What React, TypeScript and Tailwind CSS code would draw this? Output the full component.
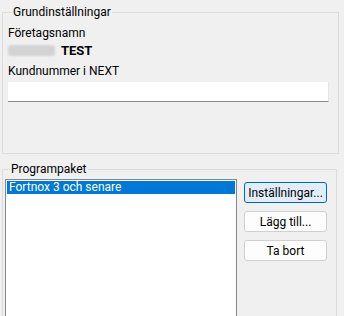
import React from "react";

const font = { fontFamily: 'Roboto, "Liberation Sans", sans-serif' };

function WinButton({ label, focused }: { label: string; focused?: boolean }) {
  return (
    <button
      className={
        "h-[21px] w-[83px] rounded-[3px] border text-[12px] leading-none text-black " +
        (focused ? "border-[#0067c0] bg-[#e0eef9]" : "border-[#d0d0d0] bg-[#fdfdfd]")
      }
    >
      {label}
    </button>
  );
}

export default function App() {
  return (
    <div
      className="w-[344px] h-[316px] overflow-hidden bg-[#f0f0f0] text-[12px] text-black"
      style={font}
    >
      <fieldset className="ml-[2px] mt-[5px] h-[149px] w-[337px] border border-[#dcdcdc] pl-[5px] pr-[9px]">
        <legend className="ml-[4px] px-[1px] leading-[15px]">Grundinställningar</legend>
        <div className="mt-[6px] leading-[15px]">Företagsnamn</div>
        <div className="mt-[2px] flex h-[15px] items-center gap-[6px]">
          <span className="h-[11px] w-[47px] rounded-[3px] bg-[#d3d3d3] blur-[1px]" />
          <span className="text-[13px] font-bold leading-[15px]">TEST</span>
        </div>
        <div className="mt-[6px] leading-[15px]">Kundnummer i NEXT</div>
        <div className="mt-[3px] h-[20px] w-full border-b border-b-[#8a8a8a] border-r border-r-[#e5e5e5] bg-white" />
      </fieldset>

      <fieldset className="ml-[2px] mt-[8px] h-[170px] w-[335px] border border-[#dcdcdc] pl-[2px]">
        <legend className="ml-[5px] px-[1px] leading-[15px]">Programpaket</legend>
        <div className="mt-[2px] flex items-start gap-[7px]">
          <div className="h-[140px] w-[232px] border border-[#828790] bg-white p-[1px]">
            <div className="bg-[#0078d7] px-[2px] leading-[13px] text-white">Fortnox 3 och senare</div>
          </div>
          <div className="mt-[3px] flex flex-col gap-[8px]">
            <WinButton label="Inställningar..." focused />
            <WinButton label="Lägg till..." />
            <WinButton label="Ta bort" />
          </div>
        </div>
      </fieldset>
    </div>
  );
}
